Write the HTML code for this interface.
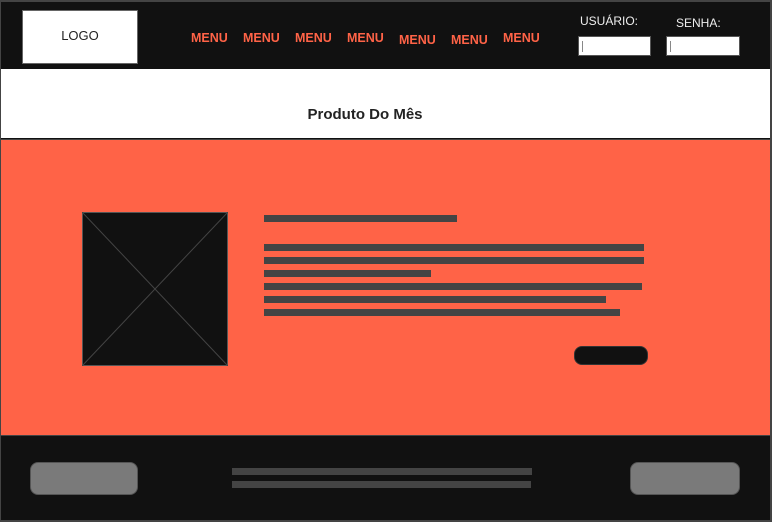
<!DOCTYPE html>
<html><head><meta charset="utf-8"><style>
*{margin:0;padding:0;box-sizing:border-box}
body{width:772px;height:522px;background:#444;position:relative;overflow:hidden;font-family:"Liberation Sans",sans-serif}
div{position:absolute}
.m{color:#ff6347;font-size:12.5px;font-weight:bold;top:31px}
.b{background:#444}
</style></head><body>
<div style="left:1px;top:2px;width:769px;height:67px;background:#111"></div>
<div style="left:22px;top:10px;width:116px;height:54px;background:#fff;border:1px solid #666;font-size:13px;color:#222;text-align:center;line-height:50px">LOGO</div>
<div class="m" style="left:191px">MENU</div>
<div class="m" style="left:243px">MENU</div>
<div class="m" style="left:295px">MENU</div>
<div class="m" style="left:347px">MENU</div>
<div class="m" style="left:399px;top:33px">MENU</div>
<div class="m" style="left:451px;top:33px">MENU</div>
<div class="m" style="left:503px">MENU</div>
<div style="left:580px;top:14px;color:#eee;font-size:12px">USUÁRIO:</div>
<div style="left:676px;top:16px;color:#eee;font-size:12px">SENHA:</div>
<div style="left:578px;top:36px;width:73px;height:20px;background:#fff;border:1px solid #555"><div style="left:3px;top:4px;width:1px;height:11px;background:#888"></div></div>
<div style="left:666px;top:36px;width:74px;height:20px;background:#fff;border:1px solid #555"><div style="left:3px;top:4px;width:1px;height:11px;background:#888"></div></div>
<div style="left:1px;top:69px;width:769px;height:70px;background:#fff"></div>
<div style="left:0;top:106px;width:730px;text-align:center;font-size:15px;font-weight:bold;color:#222">Produto Do Mês</div>
<div style="left:1px;top:138px;width:769px;height:1px;background:#111"></div>
<div style="left:1px;top:140px;width:769px;height:295px;background:#ff6347"></div>
<svg style="position:absolute;left:82px;top:212px" width="146" height="154"><rect x="0.5" y="0.5" width="145" height="153" fill="#111" stroke="#555"/><path d="M0 0L146 154M146 0L0 154" stroke="#444"/></svg>
<div class="b" style="left:264px;top:215px;width:193px;height:7px"></div>
<div class="b" style="left:264px;top:244px;width:380px;height:7px"></div>
<div class="b" style="left:264px;top:257px;width:380px;height:7px"></div>
<div class="b" style="left:264px;top:270px;width:167px;height:7px"></div>
<div class="b" style="left:264px;top:283px;width:378px;height:7px"></div>
<div class="b" style="left:264px;top:296px;width:342px;height:7px"></div>
<div class="b" style="left:264px;top:309px;width:356px;height:7px"></div>
<div style="left:574px;top:346px;width:74px;height:19px;background:#111;border-radius:8px;border:1px solid #333"></div>
<div style="left:1px;top:436px;width:769px;height:84px;background:#111"></div>
<div style="left:30px;top:462px;width:108px;height:33px;background:#7a7a7a;border-radius:8px;border:1px solid #555"></div>
<div style="left:630px;top:462px;width:110px;height:33px;background:#7a7a7a;border-radius:8px;border:1px solid #555"></div>
<div class="b" style="left:232px;top:468px;width:300px;height:7px"></div>
<div class="b" style="left:232px;top:481px;width:299px;height:7px"></div>
</body></html>
